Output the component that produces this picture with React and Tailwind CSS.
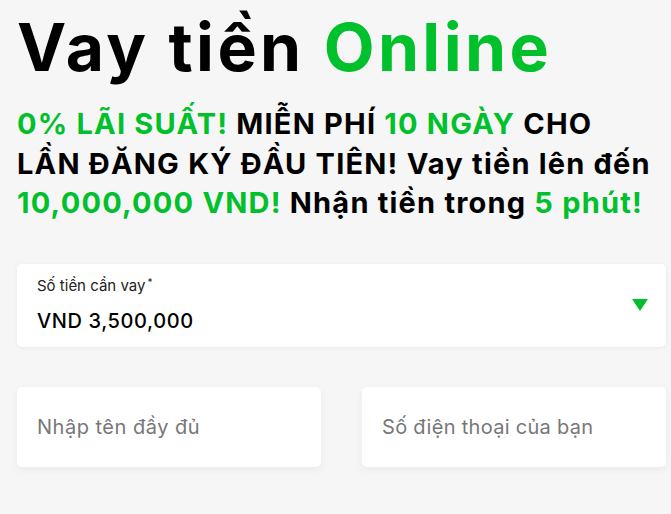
export default function App() {
  const green = "text-[#00c02b]";
  return (
    <div className="min-h-screen w-[671px] bg-[#f6f6f6] font-['Inter',sans-serif] overflow-hidden">
      <div className="pl-[17px] pt-[8px]">
        <h1 className="text-[66px] font-bold leading-[78px] tracking-[3.4px] text-black">
          Vay tiền <span className={green}>Online</span>
        </h1>
        <p className="mt-[18px] text-[29px] font-bold leading-[39.5px] tracking-[1.2px] text-black whitespace-nowrap">
          <span className={green}>0% LÃI SUẤT!</span> MIỄN PHÍ <span className={green}>10 NGÀY</span> CHO
          <br />
          LẦN ĐĂNG KÝ ĐẦU TIÊN! Vay tiền lên đến
          <br />
          <span className={green}>10,000,000 VND!</span> Nhận tiền trong <span className={green}>5 phút!</span>
        </p>
      </div>

      <div className="ml-[17px] mr-[5px] mt-[41px] flex h-[83px] items-center justify-between rounded-[5px] bg-white pl-[20px] pr-[18px] shadow-[0_1px_4px_rgba(0,0,0,0.06)]">
        <div className="flex flex-col">
          <span className="text-[15px] leading-[18px] text-[#222]">
            Số tiền cần vay<sup className="ml-[2px] text-[10px]">*</sup>
          </span>
          <span className="mt-[14px] text-[20px] font-medium leading-[24px] tracking-[0.6px] text-black">VND 3,500,000</span>
        </div>
        <svg width="16" height="12" viewBox="0 0 16 12">
          <path d="M0 0 H16 L8 12 Z" fill="#00c02b" />
        </svg>
      </div>

      <div className="ml-[17px] mt-[40px] grid grid-cols-[304px_304px] gap-[41px]">
        <div className="flex h-[80px] items-center rounded-[5px] bg-white pl-[20px] shadow-[0_3px_8px_rgba(0,0,0,0.05)]">
          <span className="text-[20px] leading-[24px] tracking-[0.5px] text-[#777]">Nhập tên đầy đủ</span>
        </div>
        <div className="flex h-[80px] items-center rounded-[5px] bg-white pl-[20px] shadow-[0_3px_8px_rgba(0,0,0,0.05)]">
          <span className="text-[20px] leading-[24px] tracking-[0.3px] text-[#777]">Số điện thoại của bạn</span>
        </div>
      </div>
    </div>
  );
}
